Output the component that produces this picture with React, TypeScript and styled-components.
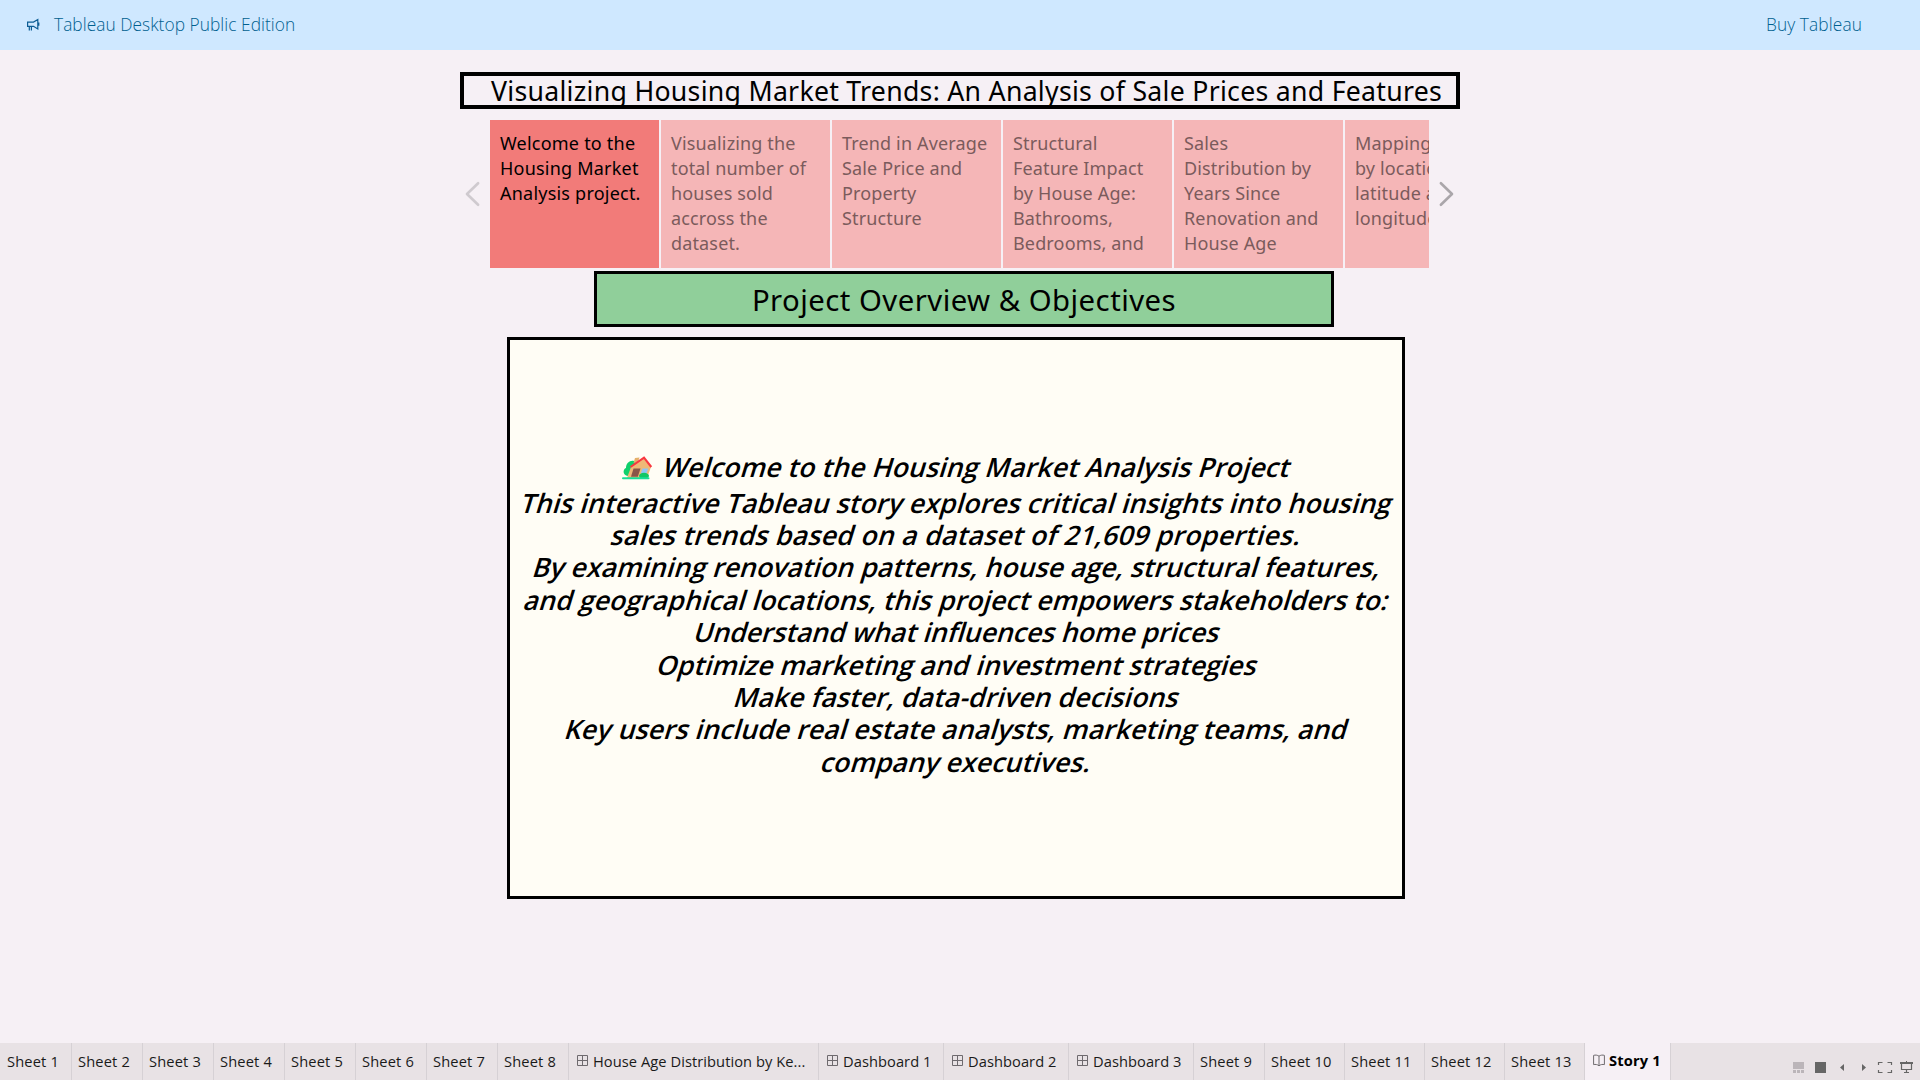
import React from "react";
import styled, { createGlobalStyle } from "styled-components";

const GlobalStyle = createGlobalStyle`
  * { box-sizing: border-box; }
  html, body { margin: 0; padding: 0; }
  body { background: #f6f0f5; overflow: hidden; }
`;

const Page = styled.div`
  display: flex;
  flex-direction: column;
  width: 1920px;
  height: 1080px;
  background: #f6f0f5;
  color: #000;
  font-family: "Noto Sans", sans-serif;
`;

const Banner = styled.header`
  flex: none;
  display: flex;
  align-items: center;
  height: 50px;
  padding: 0 58px 0 26px;
  background: #cfe8ff;
  color: #00608f;
  font: 300 17.33px/24px "Open Sans", sans-serif;
`;

const BannerText = styled.span<{ $grow?: boolean }>`
  margin: ${(p) => (p.$grow ? "0 auto 0 14px" : "0")};
  padding-bottom: 2px;
  letter-spacing: ${(p) => (p.$grow ? 0.04 : 0.1)}px;
`;

const Story = styled.main`
  flex: 1;
  display: flex;
  flex-direction: column;
  align-items: center;
  padding-top: 22px;
`;

const StoryTitle = styled.h1`
  width: 1000px;
  height: 37px;
  margin: 0;
  padding-left: 27px;
  border: 4px solid #000;
  overflow: hidden;
  white-space: nowrap;
  font-size: 26.67px;
  font-weight: 400;
  line-height: 29px;
  letter-spacing: 0.28px;
`;

const Navigator = styled.nav`
  display: flex;
  align-items: center;
  margin-top: 11px;
  width: 1000px;
  height: 148px;
  padding-left: 4px;
`;

const ArrowButton = styled.button<{ $dim?: boolean }>`
  flex: none;
  display: flex;
  padding: 0 0 1px;
  border: 0;
  background: none;
  color: #aaa6aa;
  opacity: ${(p) => (p.$dim ? 0.5 : 1)};
`;

const Points = styled.div`
  flex: none;
  display: flex;
  gap: 2px;
  width: 939px;
  height: 148px;
  margin: 0 10px 0 10px;
  overflow: hidden;
`;

const Point = styled.div<{ $active?: boolean }>`
  flex: none;
  width: 169px;
  padding: 11px 10px 0;
  background: ${(p) => (p.$active ? "#f27b79" : "#f5b6b7")};
  color: ${(p) => (p.$active ? "#000" : "#7b5b5c")};
  font-size: 18px;
  font-weight: 400;
  line-height: 25px;
  letter-spacing: ${(p) => (p.$active ? 0.22 : 0.15)}px;
  white-space: pre;
`;

const Heading = styled.h2`
  display: flex;
  align-items: center;
  justify-content: center;
  width: 740px;
  height: 56px;
  margin: 3px 0 0 8px;
  padding-top: 2px;
  border: 3px solid #000;
  background: #90cf9a;
  font-size: 29.33px;
  font-weight: 400;
  line-height: 40px;
  letter-spacing: 0.46px;
`;

const Overview = styled.section`
  width: 898px;
  height: 562px;
  margin: 10px 8px 0 0;
  padding: 107px 0 0 3px;
  border: 3px solid #000;
  background: #fffdf5;
  text-align: center;
  font: 600 26.67px/32.4px "Open Sans", sans-serif;
`;

const Line = styled.p<{ $spacing?: number; $height?: number }>`
  display: flex;
  justify-content: center;
  align-items: center;
  height: ${(p) => p.$height ?? 32.4}px;
  margin: 0;
  white-space: pre;
  letter-spacing: ${(p) => p.$spacing ?? 0.08}px;
`;

const Slanted = styled.span`
  transform: skewX(-17deg);
`;

const HouseIcon = styled.svg`
  flex: none;
  margin: 3px 11px 0 -2px;
`;

const TabBar = styled.footer`
  flex: none;
  display: flex;
  height: 37px;
  background: #e8e2e5;
  font: 400 14.67px/20px "Open Sans", sans-serif;
`;

const Tab = styled.div<{ $width: number; $active?: boolean; $first?: boolean; $spacing: number }>`
  flex: none;
  display: flex;
  align-items: flex-start;
  gap: 4px;
  width: ${(p) => p.$width}px;
  padding: ${(p) => (p.$active ? 7 : 8)}px 0 0 ${(p) => (p.$first ? 7 : 6)}px;
  border-left: ${(p) => (p.$first ? 0 : 1)}px solid #d6d1d5;
  background: ${(p) => (p.$active ? "#f6f0f5" : "transparent")};
  color: ${(p) => (p.$active ? "#000" : "#1a1a1a")};
  font-weight: ${(p) => (p.$active ? 700 : 400)};
  letter-spacing: ${(p) => p.$spacing}px;
  white-space: nowrap;
`;

const TabIcon = styled.svg`
  flex: none;
  margin: 4px 0 0 2px;
`;

const BarTail = styled.div`
  flex: 1;
  display: flex;
  align-items: flex-start;
  justify-content: flex-end;
  padding: 18px 6px 0 0;
  border-left: 1px solid #d6d1d5;
`;

const points = [
  "Welcome to the\nHousing Market\nAnalysis project.",
  "Visualizing the\ntotal number of\nhouses sold\naccross the\ndataset.",
  "Trend in Average\nSale Price and\nProperty\nStructure",
  "Structural\nFeature Impact\nby House Age:\nBathrooms,\nBedrooms, and",
  "Sales\nDistribution by\nYears Since\nRenovation and\nHouse Age",
  "Mapping\nby location,\nlatitude and\nlongitude",
];

const lines: { text: string; spacing?: number }[] = [
  { text: "This interactive Tableau story explores critical insights into housing", spacing: 0.1 },
  { text: "sales trends based on a dataset of 21,609 properties.", spacing: 0.25 },
  { text: "By examining renovation patterns, house age, structural features,", spacing: 0.02 },
  { text: "and geographical locations, this project empowers stakeholders to:", spacing: 0.05 },
  { text: "Understand what influences home prices", spacing: -0.08 },
  { text: "Optimize marketing and investment strategies", spacing: 0.03 },
  { text: "Make faster, data-driven decisions" },
  { text: "Key users include real estate analysts, marketing teams, and" },
  { text: "company executives." },
];

type TabInfo = { label: string; width: number; kind?: "dashboard" | "story" };
const tabs: TabInfo[] = [
  ...[1, 2, 3, 4, 5, 6, 7, 8].map((n) => ({ label: `Sheet ${n}`, width: 71 })),
  { label: "House Age Distribution by Ke...", width: 250, kind: "dashboard" },
  { label: "Dashboard 1", width: 125, kind: "dashboard" },
  { label: "Dashboard 2", width: 125, kind: "dashboard" },
  { label: "Dashboard 3", width: 125, kind: "dashboard" },
  { label: "Sheet 9", width: 71 },
  ...[10, 11, 12, 13].map((n) => ({ label: `Sheet ${n}`, width: 80 })),
  { label: "Story 1", width: 86, kind: "story" },
];

const Megaphone = () => (
  <svg width="14" height="14" viewBox="0 0 14 14" fill="none" stroke="#0b5c94" strokeWidth="1.2">
    <path d="M1.6 4.1H7.5L11.8 1.6V10.9L7.5 8.3H1.6ZM3.3 8.3V12.6M5.4 8.3V12.6M12.8 4.6V7.8" />
  </svg>
);

const Chevron = ({ right }: { right?: boolean }) => (
  <svg width="16" height="26" viewBox="0 0 16 26" fill="none" stroke="currentColor" strokeWidth="2.6" strokeLinecap="round" strokeLinejoin="round">
    <path d={right ? "M1.9 2.2L13 13L1.9 23.8" : "M14.1 2.2L3 13L14.1 23.8"} />
  </svg>
);

const House = () => (
  <HouseIcon width="32" height="24" viewBox="0 0 32 24">
    <path d="M7 20C1 19 2 13 5 12C5 7 9 4 13 5L16 8L10 20Z" fill="#10d06c" />
    <path d="M14 2L18.5 1.5L17 6L12.5 7Z" fill="#e6b06a" />
    <path d="M10 11L22.5 2L30 11L26 22H6Z" fill="#efb877" />
    <path d="M12.5 12.5H19.5L16.8 20.7H10Z" fill="#8a5647" />
    <path d="M21.5 12.5H27.2L25.5 17.2H19.8Z" fill="#8ec5f5" />
    <path d="M9.5 11L23 1.7L30.3 11" fill="none" stroke="#f93740" strokeWidth="2.1" />
    <ellipse cx="23" cy="19.8" rx="5" ry="3" fill="#10c765" />
    <rect x="1" y="21.3" width="27.5" height="2" rx="1" fill="#17e096" />
  </HouseIcon>
);

const DashboardIcon = () => (
  <TabIcon width="12" height="12" viewBox="0 0 12 12" fill="none" stroke="#6e6a6e">
    <path d="M.5 .5H10.5V10.5H.5ZM5.5 .5V10.5M.5 5.5H10.5" />
  </TabIcon>
);

const StoryIcon = () => (
  <TabIcon width="12" height="13" viewBox="0 0 12 13" fill="none" stroke="#6e6a6e">
    <path d="M6 2.2C4.5 1 2.2 .8 .6 1.4V10.6C2.3 10.2 4.4 10.4 6 11.8C7.6 10.4 9.7 10.2 11.4 10.6V1.4C9.8 .8 7.5 1 6 2.2ZM6 2.2V11.8" />
  </TabIcon>
);

const ViewControls = () => (
  <svg width="122" height="14" viewBox="0 0 122 14">
    <g fill="#bbb5b9">
      <path d="M1 1H12V8H1ZM1 9H4V12H1ZM5 9H8V12H5ZM9 9H12V12H9Z" />
    </g>
    <g fill="#666">
      <path d="M23 1H34V12H23ZM52 3V10L48 6.5ZM70 3V10L74 6.5Z" />
      <path d="M108 1H121V3H108ZM114 0H115V1H114Z" />
    </g>
    <path
      d="M86.5 4V1.5H90.5M95.5 1.5H99.5V4M99.5 9V11.5H95.5M90.5 11.5H86.5V9M109.5 3V8.5H119.5V3M114.5 8.5V11.5M112 11.5H117"
      fill="none"
      stroke="#666"
      strokeWidth="1.2"
    />
  </svg>
);

export default function App() {
  return (
    <Page>
      <GlobalStyle />
      <Banner>
        <Megaphone />
        <BannerText $grow>Tableau Desktop Public Edition</BannerText>
        <BannerText>Buy Tableau</BannerText>
      </Banner>
      <Story>
        <StoryTitle>Visualizing Housing Market Trends: An Analysis of Sale Prices and Features</StoryTitle>
        <Navigator>
          <ArrowButton $dim aria-label="Previous">
            <Chevron />
          </ArrowButton>
          <Points>
            {points.map((text, i) => (
              <Point key={text} $active={i === 0}>
                {text}
              </Point>
            ))}
          </Points>
          <ArrowButton aria-label="Next">
            <Chevron right />
          </ArrowButton>
        </Navigator>
        <Heading>Project Overview &amp; Objectives</Heading>
        <Overview>
          <Line $height={39.6}>
            <House />
            <Slanted>Welcome to the Housing Market Analysis Project</Slanted>
          </Line>
          {lines.map((line) => (
            <Line key={line.text} $spacing={line.spacing}>
              <Slanted>{line.text}</Slanted>
            </Line>
          ))}
        </Overview>
      </Story>
      <TabBar>
        {tabs.map((tab, i) => (
          <Tab
            key={tab.label}
            $width={tab.width}
            $active={tab.kind === "story"}
            $first={i === 0}
            $spacing={tab.kind === "dashboard" ? 0.06 : 0.16}
          >
            {tab.kind === "dashboard" && <DashboardIcon />}
            {tab.kind === "story" && <StoryIcon />}
            {tab.label}
          </Tab>
        ))}
        <BarTail>
          <ViewControls />
        </BarTail>
      </TabBar>
    </Page>
  );
}
